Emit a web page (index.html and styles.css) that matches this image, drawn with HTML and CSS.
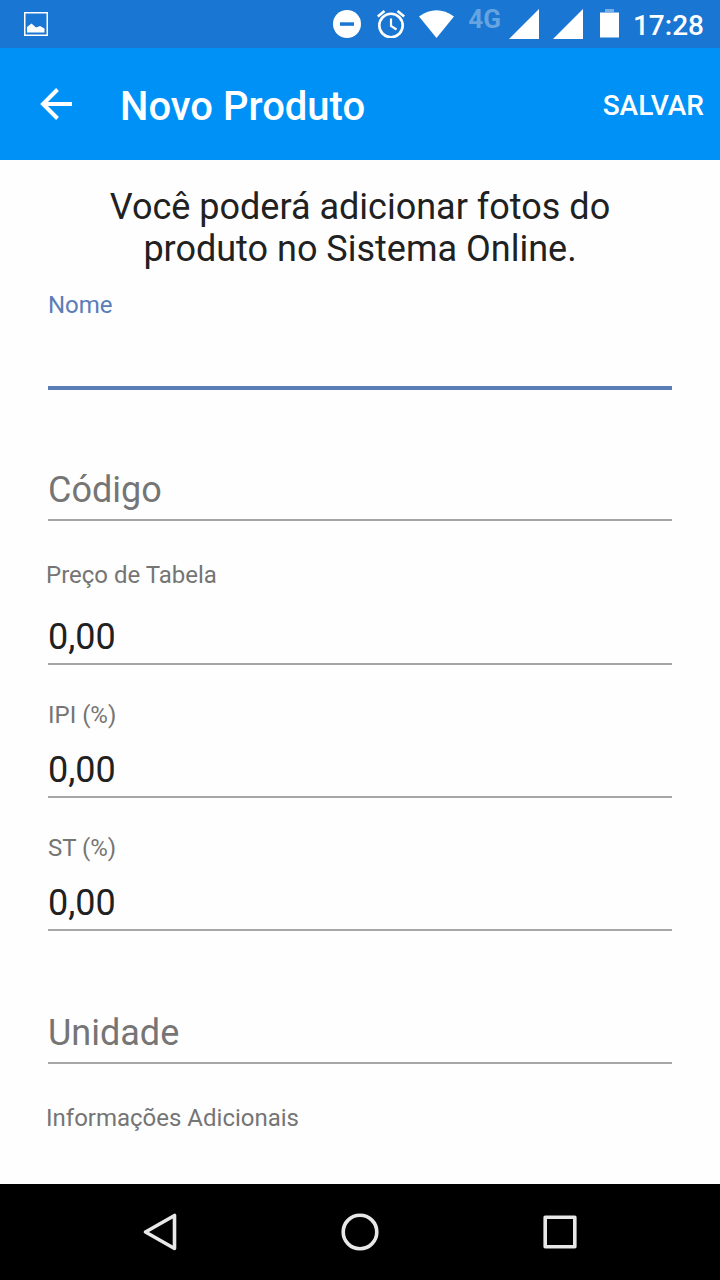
FILE: index.html
```html
<!DOCTYPE html>
<html lang="pt-BR">
<head>
<meta charset="utf-8">
<meta name="viewport" content="width=device-width, initial-scale=1">
<title>Novo Produto</title>
<link rel="stylesheet" href="styles.css">
</head>
<body>
<div class="app">
  <div class="status">
    <svg width="24" height="24" viewBox="0 0 24 24" aria-hidden="true"><path d="M.75.75h22.500v22.500H.75z" fill="none" stroke="#fff" stroke-width="1.500"/><path d="M3 15l4.500-3.500 4.500 4 4-1.500 4.500 2.500v4H3z" fill="#fff"/></svg>
    <div class="status-icons">
      <svg width="30" height="28" viewBox="0 0 30 28" aria-hidden="true"><circle cx="14" cy="14" r="14" fill="#fff"/><path d="M7 12.300h14v3.500H7z" fill="#1976d2"/></svg>
      <svg width="28" height="28" viewBox="0 0 28 28" aria-hidden="true"><g fill="none" stroke="#fff" stroke-width="2.600"><circle cx="14" cy="15.500" r="11.700"/><path d="M.8 6.500L7.500 1M27.200 6.500L20.500 1"/><path d="M14 8.500v7.500l5.500 3.500" stroke-width="2.200"/></g></svg>
      <svg width="35" height="28" viewBox="0 0 35 28" aria-hidden="true"><path d="M0 6.500Q17.500-6 35 6.500L17.500 28z" fill="#fff"/></svg>
      <div class="mobile">
        <span class="network">4G</span>
        <svg width="30" height="30" viewBox="0 0 30 30" aria-hidden="true"><path d="M0 30L30 0v30z" fill="#fff"/></svg>
      </div>
      <svg width="30" height="30" viewBox="0 0 30 30" aria-hidden="true"><path d="M0 30L30 0v30z" fill="#fff"/></svg>
      <svg width="22" height="30" viewBox="0 0 22 30" aria-hidden="true"><path d="M8 0h9v3H8z" fill="#75ade4"/><path d="M3 3.500h19v25H3z" fill="#fff"/></svg>
      <time class="clock">17:28</time>
    </div>
  </div>
  <header class="toolbar">
    <button class="icon-button" type="button" aria-label="Voltar"><svg width="32" height="32" viewBox="0 0 32 32" aria-hidden="true"><path d="M32 16H3M17.500 1.500L3 16l14.500 14.500" fill="none" stroke="#fff" stroke-width="4"/></svg></button>
    <h1 class="title">Novo Produto</h1>
    <button class="save" type="submit" form="produto">SALVAR</button>
  </header>
  <main class="content">
    <p class="intro">Você poderá adicionar fotos do produto no Sistema Online.</p>
    <form id="produto">
      <div class="field first">
        <label class="label active" for="nome">Nome</label>
        <input class="input focused" id="nome" type="text">
      </div>
      <div class="field hinted">
        <input class="input hint" type="text" placeholder="Código" aria-label="Código">
      </div>
      <div class="field wide">
        <label class="label" for="preco">Preço de Tabela</label>
        <input class="input" id="preco" type="text" inputmode="decimal" value="0,00">
      </div>
      <div class="field">
        <label class="label" for="ipi">IPI (%)</label>
        <input class="input" id="ipi" type="text" inputmode="decimal" value="0,00">
      </div>
      <div class="field">
        <label class="label" for="st">ST (%)</label>
        <input class="input" id="st" type="text" inputmode="decimal" value="0,00">
      </div>
      <div class="field hinted">
        <input class="input hint" type="text" placeholder="Unidade" aria-label="Unidade">
      </div>
      <div class="field wide">
        <span class="label">Informações Adicionais</span>
      </div>
    </form>
  </main>
  <nav class="navbar">
    <button class="icon-button" type="button" aria-label="Voltar à tela anterior"><svg width="40" height="40" viewBox="0 0 40 40" aria-hidden="true"><path d="M34.500 3.500v33L5.500 20z"/></svg></button>
    <button class="icon-button" type="button" aria-label="Início"><svg width="40" height="40" viewBox="0 0 40 40" aria-hidden="true"><circle cx="20" cy="20" r="16.800"/></svg></button>
    <button class="icon-button" type="button" aria-label="Recentes"><svg width="40" height="40" viewBox="0 0 40 40" aria-hidden="true"><path d="M5.200 5.200h29.600v29.600H5.200z"/></svg></button>
  </nav>
</div>
</body>
</html>
```
FILE: styles.css
```css
* { box-sizing: border-box; }

body {
  margin: 0;
  background: #fefefe;
  color: #212121;
  font-family: Roboto, "Liberation Sans", sans-serif;
}

svg { display: block; flex: none; }

button {
  border: 0;
  padding: 0;
  background: none;
  color: inherit;
  font: inherit;
}

.app {
  display: flex;
  flex-direction: column;
  min-height: 100vh;
}

.status {
  display: flex;
  align-items: center;
  justify-content: space-between;
  height: 48px;
  padding: 0 16px 0 24px;
  background: #1976d2;
  color: #fff;
}

.status-icons {
  display: flex;
  align-items: center;
  gap: 14px;
}

.mobile {
  display: flex;
  align-items: flex-start;
  gap: 8px;
}

.network {
  color: #66a4e1;
  font-size: 26px;
  font-weight: 700;
  line-height: 20px;
}

.clock {
  padding-top: 2px;
  font-size: 28px;
  font-weight: 500;
}

.toolbar {
  display: flex;
  align-items: center;
  height: 112px;
  padding: 0 16px 0 40px;
  background: #0091f7;
  color: #fff;
}

.title {
  flex: 1;
  margin: 0 0 0 48px;
  padding-top: 6px;
  font-size: 40px;
  font-weight: 500;
  line-height: 48px;
}

.save {
  padding-top: 2px;
  font-size: 28px;
  font-weight: 500;
}

.content {
  flex: 1;
  padding: 26px 48px 0;
}

.intro {
  margin: 0;
  padding: 0 48px;
  font-size: 36px;
  line-height: 42px;
  text-align: center;
}

.field {
  display: flex;
  flex-direction: column;
  gap: 20px;
  padding-top: 36px;
}

.first { padding-top: 21px; }

.hinted { padding-top: 81px; }

.first + .hinted { padding-top: 81px; }

.wide {
  gap: 27px;
  padding-top: 40px;
}

.label {
  color: #757575;
  font-size: 24px;
  line-height: 28px;
}

.wide .label { margin-left: -2px; }

.active { color: #5a7db8; }

.input {
  width: 100%;
  height: 49px;
  padding: 0 0 5px;
  border: 0;
  border-bottom: 2px solid #a6a6a6;
  border-radius: 0;
  outline: 0;
  background: none;
  color: #212121;
  font: inherit;
  font-size: 36px;
}

.hint {
  height: 52px;
  padding-bottom: 8px;
}

.input::placeholder {
  color: #757575;
  opacity: 1;
}

.focused {
  height: 51px;
  margin-bottom: -2px;
  border-bottom: 4px solid #5a7db8;
}

.navbar {
  display: flex;
  align-items: center;
  justify-content: center;
  gap: 160px;
  height: 96px;
  background: #000;
}

.navbar svg {
  fill: none;
  stroke: #e8e8e8;
  stroke-width: 3.6;
  stroke-linejoin: round;
}
```
